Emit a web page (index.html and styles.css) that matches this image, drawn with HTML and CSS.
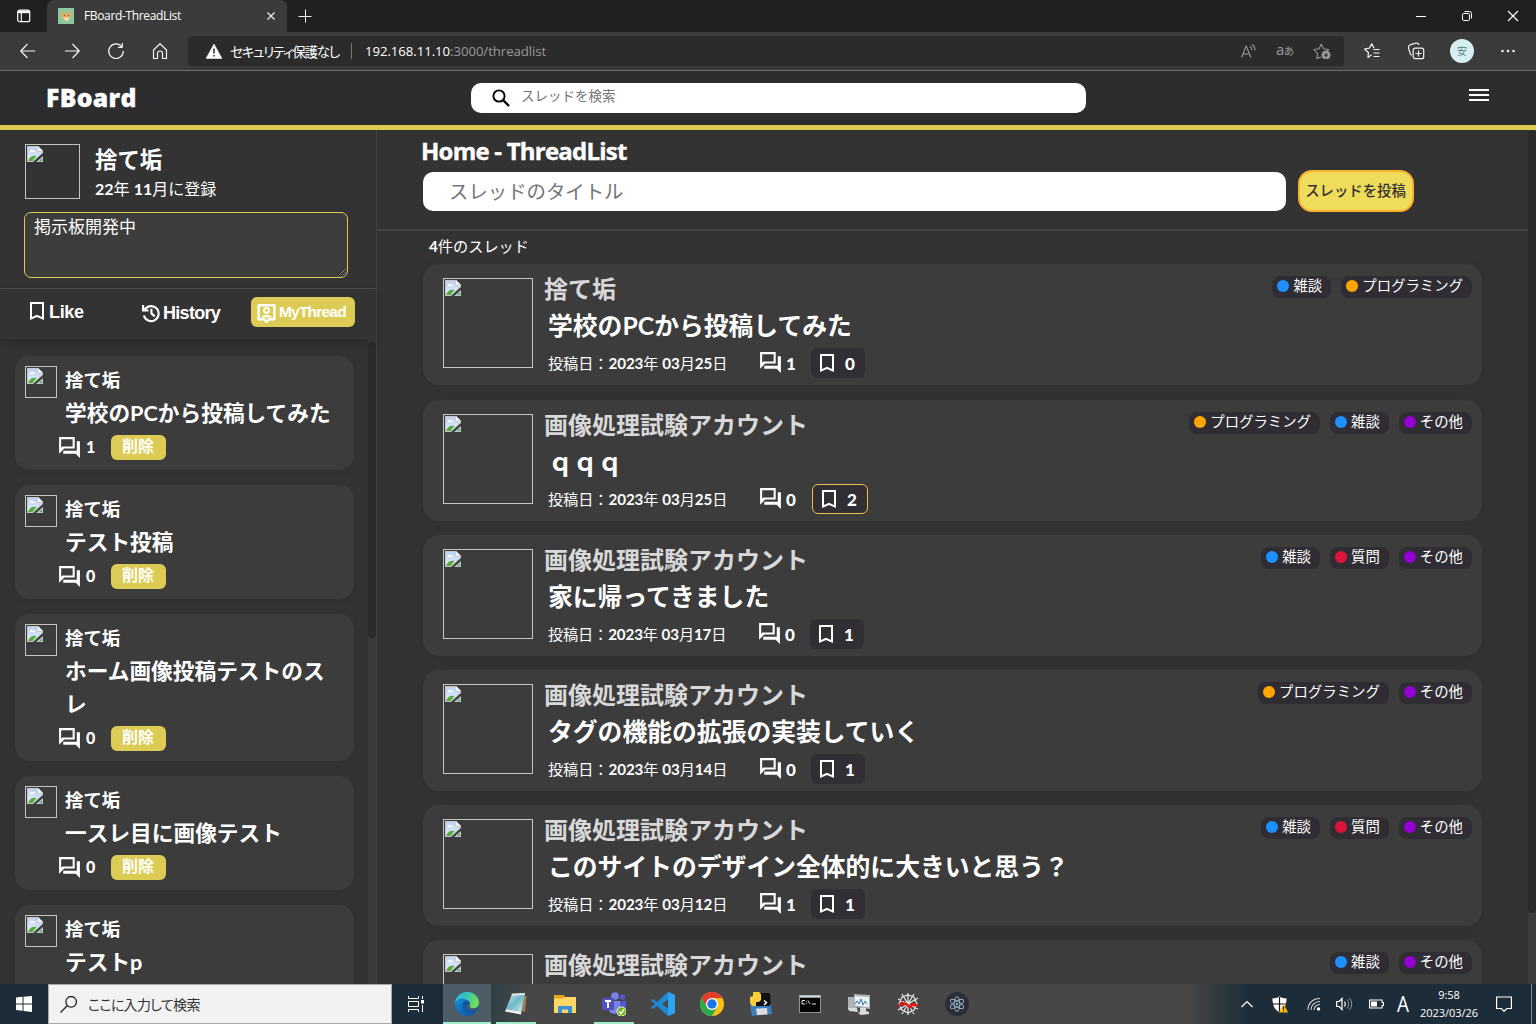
FILE: index.html
```html
<!DOCTYPE html>
<html lang="ja">
<head>
<meta charset="utf-8">
<title>FBoard-ThreadList</title>
<link rel="stylesheet" href="styles.css">
</head>
<body>
<svg class="defs" width="0" height="0" aria-hidden="true">
  <defs>
    <linearGradient id="sky" x1="0" y1="0" x2="0" y2="1"><stop offset="0" stop-color="#bcd3f5"/><stop offset="1" stop-color="#e4eefc"/></linearGradient>
    <linearGradient id="edgeA" x1="0" y1="0" x2="1" y2="0.4"><stop offset="0" stop-color="#2fb4ec"/><stop offset="0.5" stop-color="#35c7b4"/><stop offset="1" stop-color="#70dc58"/></linearGradient>
    <linearGradient id="edgeB" x1="0" y1="0" x2="0.6" y2="1"><stop offset="0" stop-color="#1b9be0"/><stop offset="1" stop-color="#0c59a8"/></linearGradient>
    <linearGradient id="note" x1="0" y1="0" x2="1" y2="1"><stop offset="0" stop-color="#c9eef2"/><stop offset="0.5" stop-color="#6db7c6"/><stop offset="1" stop-color="#d9f0f2"/></linearGradient>
  </defs>
  <symbol id="broken" viewBox="0 0 16 16">
    <path d="M0 0h11l5 5v2L6 16H0z" fill="#c6c6c6"/>
    <path d="M1 1h9.500v5H15v.5L5.500 15H1z" fill="url(#sky)"/>
    <path d="M3 6a2 2 0 0 1 3.500-1.500A1.800 1.800 0 0 1 8 6z" fill="#fff"/>
    <path d="M1 15c1.500-4.500 4.500-6 8.500-5L5.500 15z" fill="#56ad3c"/>
    <path d="M11 0v5h5z" fill="#f3f3f3"/>
    <path d="M16 10v6H9z" fill="#b9c9d0"/><path d="M15 12.500V15h-3z" fill="#56ad3c"/>
  </symbol>
  <symbol id="forum" viewBox="0 0 24 24"><path fill="currentColor" d="M15 4v7H5.170L4 12.170V4h11m2-2H2v16l5-5h10zm2 4h3v16l-4-4H6v-3h13z"/></symbol>
  <symbol id="mark" viewBox="0 0 24 24"><path fill="currentColor" d="M19 3H5v18l7-3 7 3zm-2 15-5-2.180L7 18V5h10v13z"/></symbol>
</svg>

<header class="browser">
  <div class="tabs">
    <svg class="tab-menu" viewBox="0 0 14 14"><rect x="0.700" y="1.200" width="12" height="11.500" rx="2" fill="none" stroke="#fff" stroke-width="1.200"/><path d="M1 3h12" stroke="#fff" stroke-width="2.400"/><path d="M4.300 4v8" stroke="#fff" stroke-width="1.100"/></svg>
    <div class="tab">
      <svg class="favicon" viewBox="0 0 16 16"><path d="M0 0h16v16H0z" fill="#8cc8a0"/><path d="M4 2.500 6 5h4l2.500-2.500.5 6L8.500 14 3.500 9z" fill="#e9a95a"/><path d="M4.500 9l4 1 4-1-4 4.500z" fill="#f9e6c8"/><path d="M6 7.500h1M10 7.500h1" stroke="#5a3a20"/></svg>
      <span class="tab-title">FBoard-ThreadList</span>
      <svg class="tab-close" viewBox="0 0 10 10"><path d="M1.500 1.500l7 7M8.500 1.500l-7 7" stroke="#eee" stroke-width="1.200"/></svg>
    </div>
    <svg class="tab-new" viewBox="0 0 14 14"><path d="M7.500 .5v13M.5 7.500h13" stroke="#eee"/></svg>
    <div class="window-buttons">
      <svg viewBox="0 0 12 12"><path d="M1 6.500h10" stroke="#fff"/></svg>
      <svg viewBox="0 0 12 12"><rect x="1.500" y="3.500" width="7" height="7" rx="1.200" fill="none" stroke="#fff"/><path d="M3.500 1.500h5a2 2 0 0 1 2 2v5" fill="none" stroke="#fff"/></svg>
      <svg viewBox="0 0 12 12"><path d="M1 1l10 10M11 1L1 11" stroke="#fff" stroke-width="1.200"/></svg>
    </div>
  </div>
  <div class="toolbar">
    <div class="nav-buttons">
      <svg viewBox="0 0 18 18"><path d="M16 9H2M8.500 2 1.800 9l6.700 7" /></svg>
      <svg viewBox="0 0 18 18"><path d="M2 9h14M9.500 2l6.700 7-6.700 7" /></svg>
      <svg viewBox="0 0 18 18"><path d="M15 5a7.300 7.300 0 1 0 1.300 4M15.300 1v4.300H11" /></svg>
      <svg viewBox="0 0 18 18"><path d="M2.500 8 9 1.700 15.500 8v8.500h-4v-5a2.500 2.500 0 0 0-5 0v5h-4z" /></svg>
    </div>
    <div class="address">
      <svg class="warn" viewBox="0 0 16 15"><path d="M8 0 16 14.500H0z" fill="#fff" stroke="#fff" stroke-linejoin="round" stroke-width=".5"/><path d="M8 4.500v5M8 11v1.600" stroke="#2b2b2b" stroke-width="1.500"/></svg>
      <span class="insecure">セキュリティ保護なし</span>
      <span class="divider"></span>
      <span class="url">192.168.11.10<i>:3000/threadlist</i></span>
      <div class="address-tools">
        <svg viewBox="0 0 18 16"><path d="M1.500 14.500 6.200 3l4.700 11.500M3 11h6.500M10 3.500a4 4 0 0 1 1.800 3.500M12 1.500A7 7 0 0 1 15 7.500"/></svg>
        <span class="translate">a<small>あ</small></span>
        <svg viewBox="0 0 18 16"><path d="M8 14l-4 1.500.5-5L1 6.500l5-.8L8.300 1.200l2.300 4.500 5 .8-1.500 1.500"/><circle cx="13" cy="12" r="4.500" fill="#999" stroke="none"/><path d="M13 10v4M11 12h4" stroke="#2b2b2b"/></svg>
      </div>
    </div>
    <div class="tool-icons">
      <svg viewBox="0 0 18 18"><path d="M8.500 12.800 5 15.500l.4-5L1.500 7l4.800-.8 2.500-4.400L11 6.200M10.500 7.500h6M10.500 11h6M10.500 14.500h6"/></svg>
      <svg viewBox="0 0 18 18"><rect x="6.200" y="6.200" width="10.500" height="10.500" rx="2"/><path d="M11.500 8.500v6M8.500 11.500h6M4.500 13.500C3 12 1.500 6.500 1.500 5s1-2 2-2.300l5.500-1.500c1.500-.3 2.500.3 3 1.800"/></svg>
      <span class="profile">安</span>
      <svg class="dots" viewBox="0 0 18 18"><circle cx="3.500" cy="9" r="1.300"/><circle cx="9" cy="9" r="1.300"/><circle cx="14.500" cy="9" r="1.300"/></svg>
    </div>
  </div>
</header>

<div class="app-bar">
  <h1 class="logo">FBoard</h1>
  <div class="site-search">
    <svg viewBox="0 0 18 18"><circle cx="7" cy="7" r="5.600" fill="none" stroke="#000" stroke-width="1.900"/><path d="M11 11l6 6" stroke="#000" stroke-width="2.400"/></svg>
    <span>スレッドを検索</span>
  </div>
  <div class="burger"><i></i><i></i><i></i></div>
</div>

<div class="app">
  <aside class="side">
    <section class="me">
      <div class="me-head">
        <div class="pic"><svg><use href="#broken"/></svg></div>
        <div><div class="me-name">捨て垢</div><div class="me-date"><b>22</b>年 <b>11</b>月に登録</div></div>
      </div>
      <div class="bio">掲示板開発中<svg class="grip" viewBox="0 0 9 9"><path d="M0 8.500 8.500 0M5 8.500 8.500 5" stroke="#111" stroke-width="1.600"/><path d="M.5 8.500 8.500.5M5 8.500 8.500 5" stroke="#ddd" stroke-width=".8"/></svg></div>
    </section>
    <nav class="side-nav">
      <span class="nav-like"><svg viewBox="0 0 24 24"><use href="#mark"/></svg>Like</span>
      <span class="nav-history"><svg viewBox="0 0 24 24"><path d="M4.500 8a9 9 0 1 1-1 7M2.500 2.500v6.500h6.500M12.500 7v5.500l4 3.500" fill="none" stroke="currentColor" stroke-width="2.600"/></svg>History</span>
      <span class="nav-mine"><svg viewBox="0 0 24 24"><path d="M3 2.500h18v16h-6l-3 3-3-3H3z" fill="none" stroke="currentColor" stroke-width="2.800" stroke-linejoin="round"/><circle cx="12" cy="8.500" r="2.800" fill="none" stroke="currentColor" stroke-width="2.400"/><path d="M6 16.500c1-4 11-4 12 0z" fill="currentColor"/></svg>MyThread</span>
    </nav>
    <div class="side-list">
      <div class="side-cards">
        <article class="mini"><div class="pic"><svg><use href="#broken"/></svg></div><div class="mini-body"><div class="mini-name">捨て垢</div><div class="mini-title">学校のPCから投稿してみた</div><div class="mini-foot"><svg><use href="#forum"/></svg><b>1</b><span class="del">削除</span></div></div></article>
        <article class="mini"><div class="pic"><svg><use href="#broken"/></svg></div><div class="mini-body"><div class="mini-name">捨て垢</div><div class="mini-title">テスト投稿</div><div class="mini-foot"><svg><use href="#forum"/></svg><b>0</b><span class="del">削除</span></div></div></article>
        <article class="mini"><div class="pic"><svg><use href="#broken"/></svg></div><div class="mini-body"><div class="mini-name">捨て垢</div><div class="mini-title">ホーム画像投稿テストのスレ</div><div class="mini-foot"><svg><use href="#forum"/></svg><b>0</b><span class="del">削除</span></div></div></article>
        <article class="mini"><div class="pic"><svg><use href="#broken"/></svg></div><div class="mini-body"><div class="mini-name">捨て垢</div><div class="mini-title">一スレ目に画像テスト</div><div class="mini-foot"><svg><use href="#forum"/></svg><b>0</b><span class="del">削除</span></div></div></article>
        <article class="mini"><div class="pic"><svg><use href="#broken"/></svg></div><div class="mini-body"><div class="mini-name">捨て垢</div><div class="mini-title">テストp</div></div></article>
      </div>
      <div class="side-scroll"><i></i></div>
    </div>
  </aside>

  <main class="main">
    <section class="composer">
      <h2>Home - ThreadList</h2>
      <div class="composer-row"><div class="title-input">スレッドのタイトル</div><div class="post">スレッドを投稿</div></div>
    </section>
    <div class="count"><b>4</b>件のスレッド</div>
    <div class="threads">
      <article class="thread first"><div class="pic"><svg><use href="#broken"/></svg></div><div class="body"><div class="name">捨て垢</div><div class="title">学校のPCから投稿してみた</div><div class="meta"><span class="date">投稿日：<b>2023</b>年 <b>03</b>月<b>25</b>日</span><svg class="forum"><use href="#forum"/></svg><b class="replies">1</b><span class="fav"><svg><use href="#mark"/></svg>0</span></div></div><div class="tags"><span class="tag blue">雑談</span><span class="tag orange">プログラミング</span></div></article>
      <article class="thread"><div class="pic"><svg><use href="#broken"/></svg></div><div class="body"><div class="name">画像処理試験アカウント</div><div class="title">ｑｑｑ</div><div class="meta"><span class="date">投稿日：<b>2023</b>年 <b>03</b>月<b>25</b>日</span><svg class="forum"><use href="#forum"/></svg><b class="replies">0</b><span class="fav on"><svg><use href="#mark"/></svg>2</span></div></div><div class="tags"><span class="tag orange">プログラミング</span><span class="tag blue">雑談</span><span class="tag purple">その他</span></div></article>
      <article class="thread"><div class="pic"><svg><use href="#broken"/></svg></div><div class="body"><div class="name">画像処理試験アカウント</div><div class="title">家に帰ってきました</div><div class="meta"><span class="date narrow">投稿日：<b>2023</b>年 <b>03</b>月<b>17</b>日</span><svg class="forum"><use href="#forum"/></svg><b class="replies">0</b><span class="fav"><svg><use href="#mark"/></svg>1</span></div></div><div class="tags"><span class="tag blue">雑談</span><span class="tag red">質問</span><span class="tag purple">その他</span></div></article>
      <article class="thread"><div class="pic"><svg><use href="#broken"/></svg></div><div class="body"><div class="name">画像処理試験アカウント</div><div class="title">タグの機能の拡張の実装していく</div><div class="meta"><span class="date">投稿日：<b>2023</b>年 <b>03</b>月<b>14</b>日</span><svg class="forum"><use href="#forum"/></svg><b class="replies">0</b><span class="fav"><svg><use href="#mark"/></svg>1</span></div></div><div class="tags"><span class="tag orange">プログラミング</span><span class="tag purple">その他</span></div></article>
      <article class="thread"><div class="pic"><svg><use href="#broken"/></svg></div><div class="body"><div class="name">画像処理試験アカウント</div><div class="title">このサイトのデザイン全体的に大きいと思う？</div><div class="meta"><span class="date">投稿日：<b>2023</b>年 <b>03</b>月<b>12</b>日</span><svg class="forum"><use href="#forum"/></svg><b class="replies">1</b><span class="fav"><svg><use href="#mark"/></svg>1</span></div></div><div class="tags"><span class="tag blue">雑談</span><span class="tag red">質問</span><span class="tag purple">その他</span></div></article>
      <article class="thread"><div class="pic"><svg><use href="#broken"/></svg></div><div class="body"><div class="name">画像処理試験アカウント</div></div><div class="tags"><span class="tag blue">雑談</span><span class="tag purple">その他</span></div></article>
    </div>
  </main>
  <div class="page-scroll"><i></i></div>
</div>

<footer class="taskbar">
  <div class="start"><svg viewBox="0 0 16 16"><path fill="#fff" d="M0 1.500 6.500 .8v6.700H0zM7.500 .7 16 0v7.500H7.500zM0 8.500h6.500v6.300L0 14zM7.500 8.500H16V16l-8.500-1.100z"/></svg></div>
  <div class="win-search"><svg viewBox="0 0 16 16"><circle cx="10.500" cy="5.500" r="5" fill="none" stroke="#222" stroke-width="1.200"/><path d="M7 9 .5 15.500" stroke="#222" stroke-width="1.200"/></svg><span>ここに入力して検索</span></div>
  <div class="taskview"><svg viewBox="0 0 18 16"><path d="M1.500 0v2.500h10V0M1.500 16v-2.500h10V16M1.500 5.500h10v5h-10zM15.500 0v3M15.500 9v7" fill="none" stroke="#fff"/><path d="M14 4h3v3.500h-3z" fill="#fff"/></svg></div>
  <div class="apps">
    <span class="active"><svg viewBox="0 0 24 24"><circle cx="12" cy="12" r="12" fill="url(#edgeB)"/><path d="M0 11C1 4 6 0 12 0c7 0 12 5 12 10.500 0 4-3 6-6 6-2.500 0-4-1-3.500-2.500.5-1.200.8-2 .4-3C14 8 10 6.500 7 6.500 4 6.500 1.500 8 0 11z" fill="url(#edgeA)"/><path d="M7.500 13c0-2.500 2-4.500 4.500-4.500 1.500 0 2.700 1 3 2.500-.4 1.500-1.300 2.500-.5 4 1 1.500 5 2.500 8 .5C20 22 14 23 11.500 21c-2.500-1.500-4-4.500-4-8z" fill="#1059a5"/><path d="M14.900 10.500c.6 2-1.200 3-.4 4.300 1.200 2 4.500 2.500 8.500.7l-.8 1.700c-3 1.500-6.700 1.300-8.900-.5-2.300-2-1.800-5 1.600-6.200z" fill="#4b5a64"/></svg></span>
    <span class="open"><svg viewBox="0 0 24 24"><path d="M20 4h2.500L21 20l-3-1z" fill="#a57d45"/><path d="M8 2l13-1-3.500 18.500L2 17z" fill="url(#note)"/><path d="M2 17l15.500 2.500-.5 3L1 19.500z" fill="#e9f2f1"/><path d="M8 1.500 21 1v2L7.500 4z" fill="#dce2e2"/></svg></span>
    <span><svg viewBox="0 0 24 24"><path d="M1 3h9l2 2h11v16H1z" fill="#ffd766"/><path d="M1 3h9l2 2-2 1.500H1z" fill="#e8a317"/><path d="M5 14h14v7h-4v-3.500H9V21H5z" fill="#3a8fdb"/></svg></span>
    <span class="open"><svg viewBox="0 0 24 24"><circle cx="13" cy="4" r="3.800" fill="#7b83eb"/><circle cx="20.500" cy="5" r="2.700" fill="#5059c9"/><path d="M16 9h8v7a4 4 0 0 1-8 1z" fill="#5059c9"/><path d="M7 9h11v8a6 6 0 0 1-11 2z" fill="#7b83eb"/><path d="M0 6h12v12H0z" fill="#4b53bc"/><path d="M3 9h6M6 9v7" stroke="#fff" stroke-width="1.800"/><circle cx="19.500" cy="19.500" r="5" fill="#fff"/><circle cx="19.500" cy="19.500" r="4.300" fill="#75b71b"/><path d="M17 19.500l2 2 3-4" fill="none" stroke="#fff" stroke-width="1.400"/></svg></span>
    <span><svg viewBox="0 0 24 24"><path d="M17 0l7 3v18l-7 3L6 14l-4 3-2-1.500L4 12 0 8.500 2 7l4 3zM17.500 7 11 12l6.500 5z" fill="#1f8ad2" fill-rule="evenodd"/><path d="M17 0l7 3v18l-7 3z" fill="#2aa5ee"/></svg></span>
    <span><svg viewBox="0 0 24 24"><circle cx="12" cy="12" r="12" fill="#fbc116"/><path d="M1.600 6A12 12 0 0 1 22.400 6H12l-5.200 9z" fill="#e33b2e"/><path d="M1.600 6A12 12 0 0 0 12 24l5.200-9H6.800z" fill="#2da94f"/><circle cx="12" cy="12" r="6" fill="#fff"/><circle cx="12" cy="12" r="4.700" fill="#1a73e8"/></svg></span>
    <span><svg viewBox="0 0 24 24"><path d="M7 1h14l1 13H7z" fill="#111"/><path d="M1 13l21-1 1 10-20 2z" fill="#3f7fb8"/><path d="M7 16.500l11-.5.5 6.500L8 23z" fill="#ddd"/><path d="M6 4h15v10H6z" fill="#111"/><path d="M15 8.500l2.500 2L15 13" stroke="#fff" stroke-width="1.500" fill="none"/><path d="M4 0h6l2 2v6l-2 2H7v4H3l-2-3V5l3-1z" fill="#f7cf3a"/></svg></span>
    <span><svg viewBox="0 0 24 24"><path d="M1 3h22v18H1z" fill="#8d9496"/><path d="M2 6h20v14H2z" fill="#050505"/><path d="M1.500 3.500h21V5h-21z" fill="#d5dde2"/><path d="M7 8.500H4V12h3M8.500 9v.8m0 1.500v.8M10 8.500l2 3.500M14 12h4" stroke="#ddd" fill="none"/></svg></span>
    <span><svg viewBox="0 0 24 24"><path d="M1 5h8v13l-8-1zM7 2l16 1v14L7 15z" fill="#aeb3b6"/><path d="M8 4l14 1v10L8 13.500z" fill="#e7f4fb"/><path d="M8 12l2-3 2 3 2-5 2 6 2-4 2 3" fill="none" stroke="#3976a8"/><path d="M13 16h6v3l3 1v2l-8 1-3-2 2-1zM1 16h9l1 4-9-1z" fill="#d8dcde"/></svg></span>
    <span><svg viewBox="0 0 24 24"><g fill="none" stroke="#e9e9e9" stroke-width="1.200"><path d="M12 1v22M2 7l20 10M2 18 22 6M6 2l12 20M18 2 6 22M12 3l6 2 3 7-3 6-6 3-6-3-3-6 3-7z"/></g><path d="M3 14l3-3 4 1 4 3 3-3 5 2" fill="none" stroke="#e21717" stroke-width="2.600"/></svg></span>
    <span><svg viewBox="0 0 24 24"><circle cx="12" cy="12" r="12" fill="#2b2e3a"/><g fill="none" stroke="#9bb7c4" stroke-width=".9"><ellipse cx="12" cy="12" rx="7.500" ry="2.800" transform="rotate(30 12 12)"/><ellipse cx="12" cy="12" rx="7.500" ry="2.800" transform="rotate(-30 12 12)"/><ellipse cx="12" cy="12" rx="2.800" ry="7.500"/></g><circle cx="12" cy="12" r="1" fill="#b9dbe6"/></svg></span>
  </div>
  <div class="tray">
    <svg class="t-up" viewBox="0 0 12 8"><path d="M.5 7 6 1.500 11.500 7" fill="none" stroke="#fff" stroke-width="1.200"/></svg>
    <svg class="t-shield" viewBox="0 0 16 17"><path d="M7.500 0C9 1.500 12 2 15 2c0 7-2 12-7.500 14.500C2 14 0 9 0 2c3 0 6-.5 7.500-2z" fill="#fff" stroke="#111" stroke-width=".7"/><path d="M7.500 1v15M0 8h15" stroke="#111" stroke-width="1.200"/><path d="M11.500 7.500 16 16.500H7z" fill="#fbbd12"/><path d="M11.500 10.500v3M11.500 14.500v1" stroke="#111" stroke-width="1.200"/></svg>
    <svg class="t-wifi" viewBox="0 0 14 14"><g fill="none" stroke="#ddd" stroke-width="1.100"><path d="M1 13C1 6 6 1.500 13 1.500M4 13C4 8 8 4.500 13 4.500M7 13C7 10 9.500 7.500 13 7.500"/></g><circle cx="11.500" cy="12" r="1.700" fill="#fff"/></svg>
    <svg class="t-vol" viewBox="0 0 17 14"><path d="M.7 4.500h2.500L6 1.500v11L3.200 9.500H.7zM8.500 4.500q1.500 2.500 0 5" fill="none" stroke="#fff" stroke-width="1.200"/><path d="M11 2.500q3.500 4.500 0 9M13.500 1q4.500 6 0 12" fill="none" stroke="#8b969d"/></svg>
    <svg class="t-bat" viewBox="0 0 15 10"><path d="M.6 1h12.500v2.500h1.300v3h-1.300V9H.6z" fill="none" stroke="#fff" stroke-width="1.100"/><path d="M2 2.500h6v5H2z" fill="#fff"/></svg>
    <span class="ime">A</span>
    <div class="clock"><span>9:58</span><span>2023/03/26</span></div>
    <svg class="t-note" viewBox="0 0 16 16"><path d="M.6 1h14.800v11.500h-4.500L8 15.300 5.500 12.500H.6z" fill="none" stroke="#fff" stroke-width="1.200"/></svg>
  </div>
</footer>
</body>
</html>
```
FILE: styles.css
```css
* { box-sizing: border-box; }
body { margin: 0; width: 1536px; height: 1024px; overflow: hidden; display: flex; flex-direction: column; background: #333; color: #fff; font-family: Lato, "Noto Sans CJK JP", sans-serif; }
svg { display: block; flex: none; }
.defs { position: absolute; }
h1, h2 { margin: 0; }
div, span { white-space: nowrap; }

/* browser chrome */
.browser { height: 71px; flex: none; background: #3b3b3b; border-bottom: 1px solid #6b6e6e; font-family: "Open Sans", "Noto Sans CJK JP", sans-serif; }
.tabs { height: 32px; background: #202020; display: flex; align-items: center; padding-left: 17px; }
.tab-menu { width: 14px; height: 14px; }
.tab { width: 240px; height: 32px; margin-left: 16px; background: #3b3b3b; border-radius: 7px 7px 0 0; display: flex; align-items: center; padding: 0 11px; }
.favicon { width: 16px; height: 16px; margin-right: 10px; }
.tab-title { font-size: 12px; letter-spacing: -0.35px; flex: 1; padding-bottom: 1px; }
.tab-close { width: 10px; height: 10px; }
.tab-new { width: 14px; height: 14px; margin-left: 11px; }
.window-buttons { margin-left: auto; display: flex; gap: 34px; padding-right: 17px; }
.window-buttons svg { width: 12px; height: 12px; }
.toolbar { height: 38px; display: flex; align-items: center; padding-left: 19px; }
.nav-buttons { display: flex; gap: 26px; width: 169px; }
.nav-buttons svg, .tool-icons svg { width: 18px; height: 18px; fill: none; stroke: #f2f2f2; stroke-width: 1.2; stroke-linejoin: round; }
.address { width: 1156px; height: 30px; background: #2b2b2b; border-radius: 4px; display: flex; align-items: center; padding-left: 18px; }
.warn { width: 16px; height: 15px; margin-right: 8px; }
.insecure { width: 110px; font-size: 13.500px; font-feature-settings: "palt"; letter-spacing: -1.25px; padding-bottom: 1px; }
.divider { width: 1px; height: 16px; background: #777; margin: 0 13px 0 11px; }
.url { font-size: 13.200px; letter-spacing: -0.06px; }
.url i { font-style: normal; color: #999; }
.address-tools { margin-left: auto; display: flex; align-items: center; gap: 18px; padding-right: 13px; color: #999; }
.address-tools svg { width: 18px; height: 16px; fill: none; stroke: #999; stroke-width: 1.1; stroke-linejoin: round; }
.translate { width: 19px; font-size: 15px; line-height: 16px; letter-spacing: -0.7px; padding-bottom: 2px; }
.translate small { font-size: 10.500px; }
.tool-icons { display: flex; align-items: center; margin-left: 19px; gap: 26px; }
.profile { width: 24px; height: 24px; border-radius: 50%; background: #d8eff2; color: #4c8088; font-size: 10px; line-height: 24px; text-align: center; margin: 0 -1px; }
.tool-icons .dots { fill: #eee; stroke: none; }

/* application bar */
.app-bar { height: 59px; flex: none; background: #2d2d2f; border-bottom: 5px solid #dccb55; display: flex; align-items: center; padding-left: 46px; }
.logo { width: 425px; font: 800 24.800px/30px "Open Sans", sans-serif; letter-spacing: 0.3px; padding-bottom: 2px; -webkit-text-stroke: .3px #fff; }
.site-search { width: 615px; height: 30px; background: #fff; border-radius: 10px; display: flex; align-items: center; padding-left: 21px; color: #757575; font-size: 13.500px; line-height: 20px; }
.site-search svg { width: 18px; height: 18px; margin-right: 11px; }
.site-search span { padding-bottom: 4px; }
.burger { margin-left: 383px; width: 20px; display: flex; flex-direction: column; gap: 3px; padding-bottom: 6px; }
.burger i { height: 2px; background: #fff; }

.app { height: 854px; flex: none; display: flex; overflow: hidden; }
.pic { border: 1px solid #c4c4c4; padding: 1px; flex: none; }
.pic svg { width: 16px; height: 16px; }

/* sidebar */
.side { width: 377px; border-right: 1px solid #404040; display: flex; flex-direction: column; }
.me { height: 159px; flex: none; padding: 14px 0 0 24px; border-bottom: 1px solid #4d4d4d; }
.me-head { display: flex; padding-left: 1px; gap: 15px; height: 68px; }
.me .pic { width: 55px; height: 55px; }
.me-name { font-size: 22.400px; font-weight: 700; line-height: 31px; }
.me-date { font-size: 16px; line-height: 27px; letter-spacing: 0; }
.bio { position: relative; width: 324px; height: 66px; border: 1px solid #dccb55; border-radius: 7px; background: #3c3c3c; padding: 2px 9px; font-size: 17px; line-height: 24px; }
.grip { position: absolute; right: 1px; bottom: 1px; width: 8px; height: 8px; }
.side-nav { height: 50px; flex: none; display: flex; align-items: center; font: 700 18px/24px "Liberation Sans", sans-serif; box-shadow: 0 4px 8px rgba(0,0,0,.16); position: relative; padding-bottom: 4px; letter-spacing: -0.35px; }
.side-nav span { display: flex; align-items: center; }
.side-nav svg { width: 24px; height: 24px; }
.nav-like { width: 140px; padding-left: 25px; }
.nav-like svg { margin-top: -3px; }
.nav-history { width: 111px; padding-top: 2px; letter-spacing: -0.7px; }
.side-nav .nav-history svg { width: 20px; height: 20px; margin: 0 2px 0 1px; }
.nav-mine { width: 104px; height: 30px; background: #dccb55; border-radius: 6px; padding-left: 5px; font-size: 15.500px; letter-spacing: -0.8px; }
.side-nav .nav-mine svg { width: 21px; height: 21px; margin: 2px 2px 0 0; }
.side-list { flex: 1; min-height: 0; display: flex; overflow: hidden; }
.side-cards { flex: 1; padding: 17px 14px 0 15px; display: flex; flex-direction: column; gap: 15px; }
.mini { flex: none; min-height: 114px; border-radius: 15px; background: #3c3c3c; box-shadow: 0 2px 10px rgba(0,0,0,.07); padding: 10px; display: flex; gap: 8px; }
.mini .pic { width: 32px; height: 32px; }
.mini-body { flex: 1; min-width: 0; }
.mini-name { font-size: 18.400px; font-weight: 700; line-height: 29px; }
.mini-title { font-size: 21.700px; font-weight: 700; line-height: 33px; width: 272px; padding-top: 2px; white-space: normal; margin-bottom: -2px; }
.mini-foot { display: flex; align-items: center; margin: 7px 0 0 -8px; height: 25px; font-size: 16px; }
.mini-foot svg { width: 25px; height: 25px; margin-top: -1px; }
.mini-foot b { width: 29px; padding: 0 0 2px 4px; font-weight: 900; }
.del { width: 55px; height: 25px; border-radius: 6px; background: #dccb55; font-size: 16px; font-weight: 700; line-height: 22px; text-align: center; padding-right: 1px; }
.side-scroll { width: 8px; padding-top: 3px; background: #3a3a3a; }
.side-scroll i { display: block; height: 296px; background: #2b2b2b; border-radius: 4px; }

/* main column */
.main { width: 1151px; }
.composer { height: 101px; border-bottom: 2px solid #414141; padding: 7px 0 0 44px; }
.composer h2 { font: 700 24px/28px "Open Sans", sans-serif; letter-spacing: -0.78px; margin-bottom: 5px; -webkit-text-stroke: .4px #fff; }
.composer-row { display: flex; align-items: center; gap: 12px; padding-left: 2px; }
.title-input { width: 863px; height: 39px; border-radius: 10px; background: #fff; color: #757575; padding-left: 26px; font-size: 19.400px; line-height: 39px; }
.post { width: 116px; height: 42px; border: 2px solid #fbb22c; border-radius: 14px; background: #efdc5a; color: #333; text-align: center; font-size: 14.400px; font-weight: 500; line-height: 37px; padding-right: 1px; }
.count { height: 33px; padding: 3px 0 0 52px; font-size: 15.200px; line-height: 24px; }
.threads { padding-left: 46px; display: flex; flex-direction: column; gap: 14px; }
.thread { width: 1059px; height: 121px; flex: none; border-radius: 16px; background: #3c3c3c; box-shadow: 0 2px 12px rgba(0,0,0,.07); display: flex; padding: 14px 10px 0 20px; }
.thread.first { margin-bottom: 1px; }
.thread .pic { width: 90px; height: 90px; }
.body { padding-left: 11px; flex: 1; }
.name { font-size: 24px; line-height: 24px; font-weight: 700; color: #d8d8d8; margin-top: -1px; }
.title { font-size: 24.800px; line-height: 36px; font-weight: 700; padding: 7px 0 0 4px; height: 48px; }
.meta { display: flex; align-items: center; height: 30px; margin-top: -1px; padding-left: 4px; font-size: 17px; font-weight: 900; }
.date { width: 210px; font-size: 15.200px; font-weight: 400; padding-bottom: 3px; letter-spacing: -0.08px; }
.date.narrow { width: 209px; letter-spacing: -0.15px; }
.meta .forum { width: 25px; height: 25px; margin-top: -1px; }
.replies { width: 29px; padding-left: 3px; }
.fav { width: 54px; height: 30px; border-radius: 6px; background: #312f34; display: flex; align-items: center; gap: 6px; padding-left: 4px; margin-left: -1px; }
.fav svg { width: 24px; height: 24px; }
.fav.on { width: 56px; border: 1px solid #f4b84c; margin-left: 0; }
.tags { display: flex; gap: 10px; margin-top: -2px; height: 22px; }
.tag { height: 22px; border-radius: 8px; background: #2f2d33; display: flex; align-items: center; padding: 0 9px 2px 5px; font-size: 14.400px; line-height: 20px; }
.tag::before { content: ""; width: 12px; height: 12px; border-radius: 50%; margin-right: 4px; background: #1e90ff; }
.tag.orange::before { background: #ffa500; }
.tag.red::before { background: #dc143c; }
.tag.purple::before { background: #9400d3; }
.page-scroll { width: 8px; background: #3c3c3c; }
.page-scroll i { display: block; height: 783px; background: #2b2b2b; border-radius: 4px; }

/* taskbar */
.taskbar { height: 40px; flex: none; display: flex; background: linear-gradient(90deg, #1c2c38 0 491px, #304047 491px, #474747 530px 1185px, #1c2d39 1250px); font-family: "Open Sans", "Noto Sans CJK JP", sans-serif; }
.start { width: 48px; display: grid; place-items: center; }
.start svg { width: 16px; height: 16px; }
.win-search { width: 344px; flex: none; background: #f2f2f2; border: 1px solid #aaa; display: flex; align-items: center; padding-left: 11px; color: #333; font-size: 14px; }
.win-search svg { width: 17px; height: 17px; margin-right: 11px; }
.win-search span { letter-spacing: -0.7px; font-feature-settings: "palt"; }
.start, .taskview, .apps, .tray { flex: none; }
.taskview { width: 51px; padding: 12px 0 0 15px; }
.taskview svg { width: 18px; height: 16px; }
.apps { display: flex; gap: 1px; width: 796px; }
.apps span { width: 48px; height: 40px; display: grid; place-items: center; }
.apps svg { width: 24px; height: 24px; }
.apps .active { background: #4d5c66; border-bottom: 2px solid #a0eccb; padding-top: 2px; }
.apps .open { width: 40px; margin: 0 4px; border-bottom: 2px solid #a0eccb; padding-top: 2px; }
.tray { display: flex; align-items: center; width: 293px; border-right: 1px solid #7f8b93; }
.t-up { width: 12px; height: 8px; margin-right: 19px; margin-left: 2px; }
.t-shield { width: 16px; height: 17px; margin-right: 19px; }
.t-wifi { width: 14px; height: 14px; margin-right: 15px; }
.t-vol { width: 17px; height: 14px; margin-right: 16px; }
.t-bat { width: 15px; height: 10px; margin-right: 13px; }
.ime { width: 13px; font-size: 21px; line-height: 24px; transform: scaleX(.9); transform-origin: left; }
.clock { width: 78px; display: flex; flex-direction: column; text-align: center; font-size: 11px; line-height: 18px; letter-spacing: -0.05px; }
.t-note { width: 16px; height: 16px; margin-left: 8px; }
```
